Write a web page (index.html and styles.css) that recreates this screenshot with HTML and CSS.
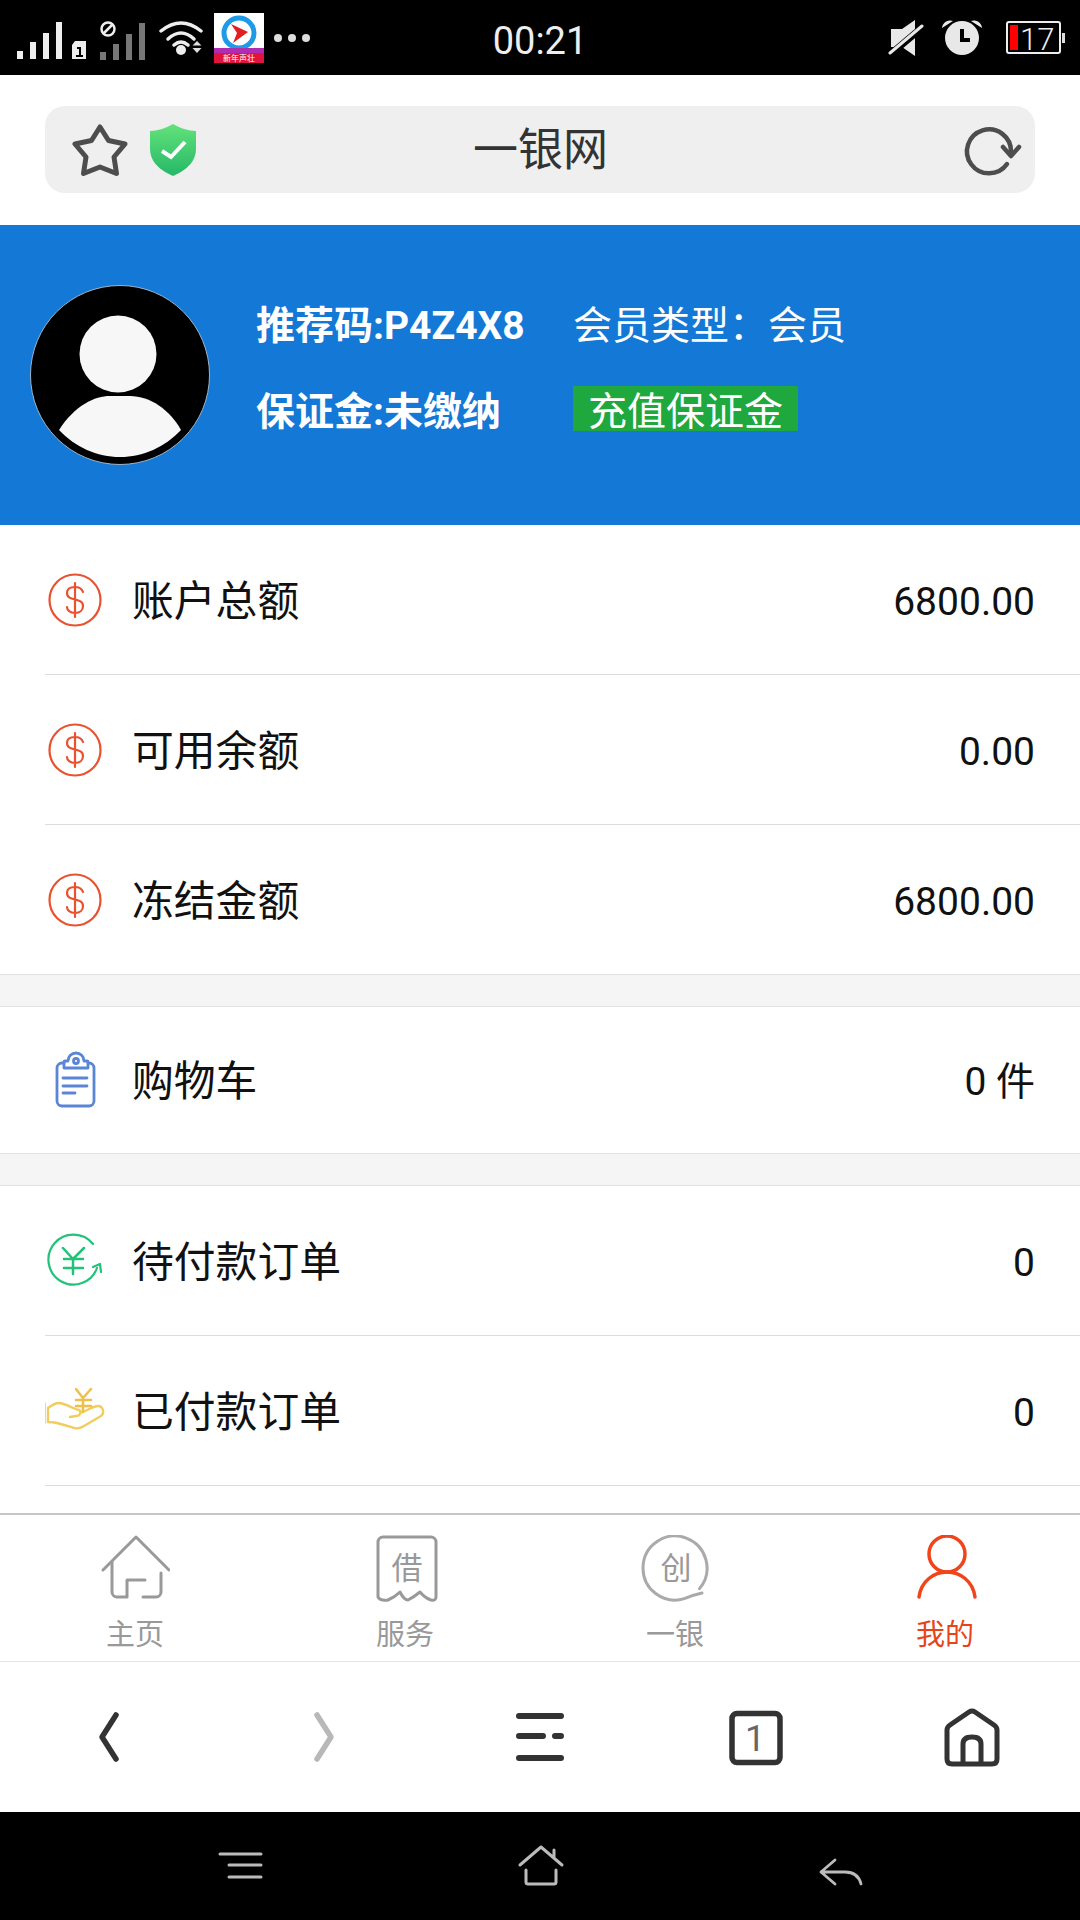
FILE: index.html
```html
<!DOCTYPE html>
<html>
<head>
    <title>一银网</title>
    <link rel="stylesheet" href="styles.css">
</head>
<body>
    <div class="status-bar">
        <div class="status-left">
            <svg class="ico-signal" viewBox="16 10 130 50">
                <g fill="#eee">
                    <rect x="17" y="47" width="6" height="8"/>
                    <rect x="30" y="38" width="6" height="17"/>
                    <rect x="43" y="29" width="6" height="26"/>
                    <rect x="56" y="18" width="6" height="37"/>
                    <path d="M72 41l3-4h11v18H72z"/>
                </g>
                <path d="M77 44h3v9M76 52h7" stroke="#000" stroke-width="2" fill="none"/>
                <g fill="#777">
                    <rect x="100" y="48" width="6" height="8"/>
                    <rect x="113" y="40" width="6" height="16"/>
                    <rect x="126" y="30" width="6" height="26"/>
                    <rect x="139" y="19" width="6" height="37"/>
                </g>
                <circle cx="108" cy="25" r="6.500" fill="none" stroke="#eee" stroke-width="2.500"/>
                <path d="M103 30l10-10" stroke="#eee" stroke-width="2.500"/>
            </svg>
            <svg class="ico-wifi" viewBox="158 16 46 42">
                <g fill="none" stroke="#eee" stroke-width="3.500" stroke-linecap="round">
                    <path d="M161 30Q181 14 201 30"/>
                    <path d="M168 38Q181 26 194 38"/>
                    <path d="M174 44Q181 38 188 44"/>
                </g>
                <circle cx="181" cy="49" r="5" fill="#eee"/>
                <path d="M197 40l4.500 4.500h-9zM192.500 47h9l-4.500 5z" fill="#ddd"/>
            </svg>
            <svg class="ico-app" viewBox="214 12 50 50">
                <rect x="214" y="12" width="50" height="50" fill="#fff"/>
                <circle cx="239" cy="32" r="15" fill="none" stroke="#1e9be6" stroke-width="5"/>
                <path d="M231 23l17 8-15 11 4-10z" fill="#e02020"/>
                <rect x="214" y="47" width="50" height="5" fill="#b02cb0"/>
                <rect x="214" y="52" width="50" height="10" fill="#e0143c"/>
                <text x="239" y="60" class="app-text">新年声壮</text>
            </svg>
            <div class="dots"><i></i><i></i><i></i></div>
        </div>
        <div class="clock">00:21</div>
        <div class="status-right">
            <svg class="ico-mute" viewBox="888 17 36 40">
                <path d="M891 28h11l13-9v36l-13-9h-11z" fill="#e8e8e8"/>
                <path d="M886 57l38-32" stroke="#000" stroke-width="7"/>
                <path d="M890 52l32-27" stroke="#e8e8e8" stroke-width="3" stroke-linecap="round"/>
            </svg>
            <svg class="ico-alarm" viewBox="940 17 44 40">
                <circle cx="962" cy="37" r="17" fill="#e8e8e8"/>
                <path d="M942 27a8 8 0 0 1 11-7zM982 27a8 8 0 0 0-11-7z" fill="#e8e8e8"/>
                <path d="M962 28v11h8" fill="none" stroke="#000" stroke-width="4"/>
            </svg>
            <svg class="ico-battery" viewBox="1005 16 62 44">
                <rect x="1007" y="22" width="53" height="31" rx="2" fill="none" stroke="#eee" stroke-width="2"/>
                <rect x="1010" y="25" width="8" height="25" fill="#f00"/>
                <rect x="1062" y="33" width="3" height="10" fill="#ddd"/>
                <text x="1020" y="50" class="battery-text">17</text>
            </svg>
        </div>
    </div>

    <div class="browser-head">
        <div class="address">
            <svg class="ico-star" viewBox="72 122 56 56">
                <path d="M100 127l8.500 13.500 16.500 3.500L114 157l2.500 16.500L100 167l-16.500 6.500L86 157 75 144l16.500-3.500z" fill="none" stroke="#4d4d4d" stroke-width="5" stroke-linejoin="round"/>
            </svg>
            <svg class="ico-shield" viewBox="150 123 46 52">
                <defs>
                    <linearGradient id="shieldFill" x1="0" y1="0" x2="0" y2="1">
                        <stop offset="0" stop-color="#63e27a"/>
                        <stop offset="1" stop-color="#25b868"/>
                    </linearGradient>
                </defs>
                <path d="M173 123Q161 130 150 130V148Q150 165 173 175Q196 165 196 148V130Q185 130 173 123z" fill="url(#shieldFill)"/>
                <path d="M162 150l9 6 14-15" fill="none" stroke="#fff" stroke-width="4"/>
            </svg>
            <div class="site-title">一银网</div>
            <svg class="ico-reload" viewBox="962 124 60 52">
                <path d="M1007 164A22 22 0 1 1 1011 152" fill="none" stroke="#4d4d4d" stroke-width="4.500" stroke-linecap="round"/>
                <path d="M1003 147l8 9 8-9" fill="none" stroke="#4d4d4d" stroke-width="4.500" stroke-linecap="round" stroke-linejoin="round"/>
            </svg>
        </div>
    </div>

    <div class="profile">
        <svg class="avatar" viewBox="30 285 180 180">
            <circle cx="120" cy="375" r="89.500" fill="#000" stroke="#9db4c9" stroke-width="1"/>
            <circle cx="118" cy="354" r="38.500" fill="#f7f7f7"/>
            <path d="M59 430C75 405 95 396 110 396H130C150 396 170 410 181 430C165 447 143 457 120 457C97 457 75 447 59 430z" fill="#f7f7f7"/>
        </svg>
        <div class="profile-info">
            <div class="strong">推荐码:P4Z4X8</div>
            <div>会员类型：会员</div>
            <div class="strong">保证金:未缴纳</div>
            <div><span class="recharge">充值保证金</span></div>
        </div>
    </div>

    <div class="main">
        <div class="group">
            <div class="row">
                <svg class="row-ico" viewBox="0 0 60 60"><use href="#dollar"/></svg>
                <span class="label">账户总额</span>
                <span class="value">6800.00</span>
            </div>
            <div class="row">
                <svg class="row-ico" viewBox="0 0 60 60"><use href="#dollar"/></svg>
                <span class="label">可用余额</span>
                <span class="value">0.00</span>
            </div>
            <div class="row">
                <svg class="row-ico" viewBox="0 0 60 60"><use href="#dollar"/></svg>
                <span class="label">冻结金额</span>
                <span class="value">6800.00</span>
            </div>
        </div>
        <div class="group">
            <div class="row">
                <svg class="row-ico" viewBox="0 0 60 60">
                    <g fill="none" stroke="#5b86d6" stroke-width="2.800" stroke-linejoin="round" stroke-linecap="round">
                        <path d="M19 13h-2a5 5 0 0 0-5 5v33a5 5 0 0 0 5 5h27a5 5 0 0 0 5-5V18a5 5 0 0 0-5-5h-1"/>
                        <path d="M19 18v-6q0-1 1-1h3a8 8 0 0 1 16 0h3q1 0 1 1v6z"/>
                        <circle cx="31" cy="11" r="2.500"/>
                        <path d="M18 28h24M18 36h24M18 43h12"/>
                    </g>
                </svg>
                <span class="label">购物车</span>
                <span class="value">0 件</span>
            </div>
        </div>
        <div class="group last">
            <div class="row">
                <svg class="row-ico" viewBox="0 0 60 60">
                    <g fill="none" stroke="#22c27a" stroke-width="2.200" stroke-linecap="round" stroke-linejoin="round">
                        <path d="M48 13A25 25 0 1 0 52 37"/>
                        <path d="M48 36l7-3 1 8"/>
                        <path d="M18 17l10 11 11-11M19 28h19M19 37h19M28 28v15" stroke-width="2.500"/>
                    </g>
                </svg>
                <span class="label">待付款订单</span>
                <span class="value">0</span>
            </div>
            <div class="row">
                <svg class="row-ico" viewBox="0 0 60 60">
                    <g fill="none" stroke="#f0cd5c" stroke-width="2.400" stroke-linecap="round" stroke-linejoin="round">
                        <path d="M0 22v20" stroke-width="1.500"/>
                        <path d="M3 27C7 24 10 22 14 22C20 22 28 28 34 29C37 31 35 35 31 35L25 36"/>
                        <path d="M3 27V41C12 41 20 44 29 47C33 48 36 47 39 45L56 35C60 32 58 25 53 25C48 25 44 29 37 31"/>
                        <path d="M31 8l7 9 8-9M31 19h15M31 25h15M38 17v14" stroke="#eec04a" stroke-width="2.500"/>
                    </g>
                </svg>
                <span class="label">已付款订单</span>
                <span class="value">0</span>
            </div>
        </div>
    </div>

    <div class="tabbar">
        <div class="tab">
            <svg class="tab-ico" viewBox="0 0 70 70">
                <path d="M3 35L36 2l33 33" fill="none" stroke="#999" stroke-width="3" stroke-linecap="round" stroke-linejoin="round"/>
                <path d="M12 27v30a5 5 0 0 0 5 5h10V45h18M61 38v19a5 5 0 0 1-5 5H43" fill="none" stroke="#999" stroke-width="3" stroke-linecap="round" stroke-linejoin="round"/>
            </svg>
            <span>主页</span>
        </div>
        <div class="tab">
            <svg class="tab-ico" viewBox="0 0 70 70">
                <path d="M8 62V7a5 5 0 0 1 5-5h48a5 5 0 0 1 5 5v55Q66 66 61 65Q55 63 50 57Q44 62 38 65Q34 65 30 57Q25 62 18 65Q10 66 8 62z" fill="none" stroke="#999" stroke-width="3" stroke-linejoin="round"/>
                <text x="37" y="44" class="tab-ico-text">借</text>
            </svg>
            <span>服务</span>
        </div>
        <div class="tab">
            <svg class="tab-ico" viewBox="0 0 70 70">
                <path d="M59.500 53.600A32 32 0 1 0 45 63.400Q53 60 62 58" fill="none" stroke="#aaa" stroke-width="3" stroke-linecap="round"/>
                <text x="36" y="44" class="tab-ico-text">创</text>
            </svg>
            <span>一银</span>
        </div>
        <div class="tab active">
            <svg class="tab-ico" viewBox="0 0 70 70">
                <circle cx="37" cy="19" r="18" fill="none" stroke="#f0441a" stroke-width="3.500"/>
                <path d="M9 62C11 46 24 37 37 37s26 9 28 25" fill="none" stroke="#f0441a" stroke-width="3.500" stroke-linecap="round"/>
            </svg>
            <span>我的</span>
        </div>
    </div>

    <div class="browser-nav">
        <svg class="nav-ico" viewBox="0 0 60 60">
            <path d="M38 8L24 30l14 22" fill="none" stroke="#333" stroke-width="5.500" stroke-linecap="round" stroke-linejoin="round"/>
        </svg>
        <svg class="nav-ico" viewBox="0 0 60 60">
            <path d="M23 8l14 22-14 22" fill="none" stroke="#b8b8b8" stroke-width="5.500" stroke-linecap="round" stroke-linejoin="round"/>
        </svg>
        <svg class="nav-ico" viewBox="0 0 60 60">
            <path d="M9 9h42M9 29h24M45 29h6M9 51h42" fill="none" stroke="#333" stroke-width="6" stroke-linecap="round"/>
        </svg>
        <svg class="nav-ico" viewBox="0 0 60 60">
            <rect x="6" y="6.500" width="48" height="49" rx="5" fill="none" stroke="#333" stroke-width="5.500"/>
            <text x="29" y="44" class="tab-count">1</text>
        </svg>
        <svg class="nav-ico" viewBox="0 0 60 60">
            <path d="M5 23q0-3 3-5L27 5q3-2 6 0l19 13q3 2 3 5v29q0 5-5 5H10q-5 0-5-5z" fill="none" stroke="#333" stroke-width="5" stroke-linejoin="round"/>
            <path d="M21 56V37q0-7 9-7t9 7v19" fill="none" stroke="#333" stroke-width="5"/>
        </svg>
    </div>

    <div class="system-nav">
        <svg class="sys-ico" viewBox="0 0 50 50">
            <path d="M5 13h41M14 24h32M14 36h32" stroke="#bbb" stroke-width="3" stroke-linecap="round"/>
        </svg>
        <svg class="sys-ico" viewBox="0 0 50 50">
            <path d="M5 24L26 6l21 18M39 9v8M11 29v12q0 2 2 2h26q2 0 2-2V29" fill="none" stroke="#bbb" stroke-width="3" stroke-linecap="round" stroke-linejoin="round"/>
        </svg>
        <svg class="sys-ico" viewBox="0 0 50 50">
            <path d="M20 19L6 31l14 12M6 31h24c8 0 14 4 16 12" fill="none" stroke="#bbb" stroke-width="2.800" stroke-linecap="round" stroke-linejoin="round"/>
        </svg>
    </div>

    <svg class="defs" width="0" height="0">
        <symbol id="dollar" viewBox="0 0 60 60">
            <circle cx="30" cy="30" r="25.500" fill="none" stroke="#e9512f" stroke-width="2.200"/>
            <path d="M38 22c-1-3-4-5-8-5-5 0-8 2-8 6 0 9 16 4 16 13 0 4-3 7-8 7s-8-3-8-6M30 13v34" fill="none" stroke="#e9512f" stroke-width="2.200" stroke-linecap="round"/>
        </symbol>
    </svg>
</body>
</html>
```

FILE: styles.css
```css
* {
    box-sizing: border-box;
}
body {
    margin: 0;
    width: 1080px;
    height: 1920px;
    overflow: hidden;
    display: flex;
    flex-direction: column;
    background-color: #fff;
    font-family: Roboto, "Noto Sans CJK SC", sans-serif;
    color: #111;
}
.status-bar {
    height: 75px;
    background-color: #000;
    color: #eee;
    display: grid;
    grid-template-columns: 1fr auto 1fr;
    align-items: center;
}
.status-left {
    display: flex;
    align-items: center;
    padding-left: 16px;
}
.ico-signal {
    width: 130px;
    height: 50px;
    margin-top: 2px;
}
.ico-wifi {
    width: 46px;
    height: 42px;
    margin-left: 12px;
}
.ico-app {
    width: 50px;
    height: 50px;
    margin-left: 10px;
}
.app-text {
    font-size: 8px;
    fill: #fff;
    text-anchor: middle;
    font-family: "Noto Sans CJK SC", sans-serif;
}
.dots {
    display: flex;
    gap: 6px;
    margin-left: 10px;
}
.dots i {
    width: 8px;
    height: 8px;
    border-radius: 50%;
    background-color: #ddd;
}
.clock {
    font-size: 38px;
    padding-top: 7px;
}
.status-right {
    display: flex;
    justify-content: flex-end;
    align-items: center;
    padding-right: 13px;
}
.ico-mute {
    width: 36px;
    height: 40px;
}
.ico-alarm {
    width: 44px;
    height: 40px;
    margin-left: 16px;
}
.ico-battery {
    width: 62px;
    height: 44px;
    margin-left: 21px;
}
.battery-text {
    font-size: 31px;
    font-weight: 300;
    fill: #eee;
}
.browser-head {
    height: 150px;
    padding: 31px 45px 32px;
}
.address {
    height: 87px;
    background-color: #efefef;
    border-radius: 20px;
    display: flex;
    align-items: center;
    padding: 0 13px 0 27px;
}
.ico-star {
    width: 56px;
    height: 56px;
}
.ico-shield {
    width: 46px;
    height: 52px;
    margin-left: 22px;
}
.site-title {
    flex: 1;
    text-align: center;
    font-size: 45px;
    line-height: 60px;
    color: #333;
    font-family: "Noto Sans CJK SC", sans-serif;
    margin-left: -77px;
    padding-bottom: 6px;
}
.ico-reload {
    width: 60px;
    height: 52px;
}
.profile {
    height: 300px;
    background-color: #1478d6;
    color: #fff;
    display: flex;
    align-items: center;
    padding-left: 30px;
}
.avatar {
    width: 180px;
    height: 180px;
}
.profile-info {
    display: grid;
    grid-template-columns: 317px auto;
    row-gap: 30px;
    margin-left: 46px;
    margin-top: -20px;
    font-size: 39px;
    line-height: 56px;
    font-family: "Noto Sans CJK SC", sans-serif;
}
.strong {
    font-weight: 700;
    font-family: Roboto, "Noto Sans CJK SC", sans-serif;
    padding-top: 8px;
    line-height: 48px;
}
.recharge {
    display: inline-block;
    background-color: #1fa83d;
    height: 45px;
    line-height: 45px;
    padding: 0 15px;
}
.main {
    flex: 1;
    overflow: hidden;
    background-color: #f5f5f5;
}
.group {
    background-color: #fff;
    border-bottom: 1px solid #e2e2e2;
    border-top: 1px solid #e2e2e2;
    margin-bottom: 31px;
}
.group:first-child {
    border-top: none;
}
.group:first-child .row:last-child {
    height: 149px;
}
.group:nth-child(2) .row {
    height: 146px;
}
.group.last {
    height: 400px;
    border-bottom: none;
    margin-bottom: 0;
}
.row {
    height: 150px;
    margin-left: 45px;
    padding-right: 45px;
    display: flex;
    align-items: center;
    border-bottom: 1px solid #ddd;
}
.row:last-child {
    border-bottom: none;
}
.group.last .row:last-child {
    border-bottom: 1px solid #ddd;
}
.row-ico {
    width: 60px;
    height: 60px;
    margin-right: 27px;
}
.label {
    flex: 1;
    font-size: 41.800px;
    line-height: 56px;
    margin-bottom: 4px;
    font-family: "Noto Sans CJK SC", sans-serif;
}
.value {
    font-size: 39px;
    line-height: 46px;
    margin-top: 4px;
}
.tabbar {
    height: 149px;
    border-top: 2px solid #c6c6c6;
    border-bottom: 1px solid #e4e4e4;
    background-color: #fff;
    display: flex;
}
.tab {
    width: 270px;
    display: flex;
    flex-direction: column;
    align-items: center;
    font-size: 29px;
    color: #999;
    padding-top: 20px;
    font-family: "Noto Sans CJK SC", sans-serif;
}
.tab.active {
    color: #e8441a;
}
.tab-ico {
    width: 70px;
    height: 70px;
}
.tab span {
    line-height: 40px;
    margin-top: 7px;
}
.tab-ico-text {
    font-size: 31px;
    fill: #999;
    text-anchor: middle;
    font-family: "Noto Sans CJK SC", sans-serif;
}
.browser-nav {
    height: 150px;
    background-color: #fff;
    display: flex;
    justify-content: space-around;
    align-items: center;
}
.nav-ico {
    width: 60px;
    height: 60px;
}
.tab-count {
    font-size: 36px;
    fill: #666;
    text-anchor: middle;
}
.system-nav {
    height: 108px;
    background-color: #000;
    display: flex;
    justify-content: center;
    gap: 250px;
    align-items: center;
}
.sys-ico {
    width: 50px;
    height: 50px;
}
.defs {
    position: absolute;
}
```
